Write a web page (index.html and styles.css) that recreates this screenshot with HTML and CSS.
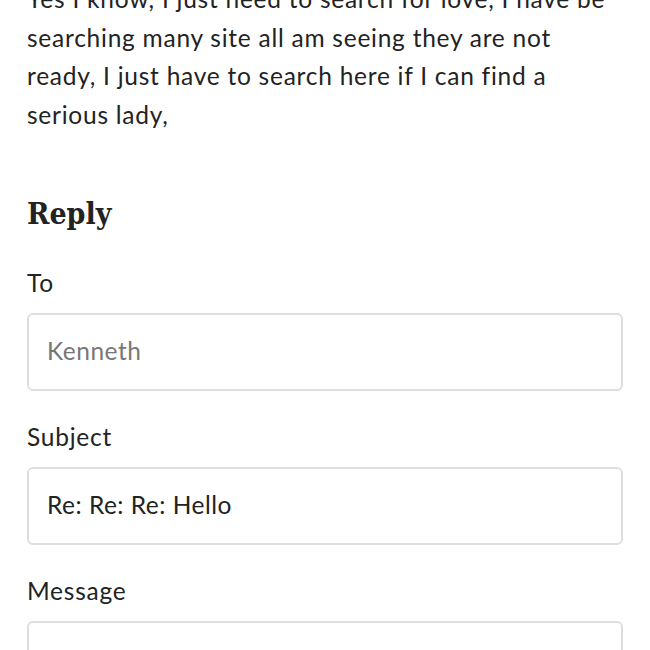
FILE: index.html
```html
<!DOCTYPE html>
<html>
<head>
<meta charset="utf-8">
<link rel="stylesheet" href="styles.css">
</head>
<body>
<div class="page">
  <p class="message-body">Yes I know, I just need to search for love, I have be searching many site all am seeing they are not ready, I just have to search here if I can find a serious lady,</p>
  <h2 class="reply-title">Reply</h2>
  <form class="reply-form">
    <label class="field-label">To</label>
    <div class="field-box muted">Kenneth</div>
    <label class="field-label">Subject</label>
    <div class="field-box">Re: Re: Re: Hello</div>
    <label class="field-label">Message</label>
    <div class="field-box tall"></div>
  </form>
</div>
</body>
</html>
```
FILE: styles.css
```css
html, body {
  margin: 0;
  padding: 0;
  background: #fff;
}
body {
  font-family: Lato, "Open Sans", sans-serif;
  color: #232323;
  overflow: hidden;
  letter-spacing: 0.75px;
}
.page {
  padding: 0 27px;
  width: 596px;
}
.message-body {
  margin: -20px 0 0 0;
  font-size: 24.5px;
  line-height: 38.5px;
  width: 596px;
}
.reply-title {
  margin: 60px 0 0 0;
  font-family: "DejaVu Serif Condensed", "DejaVu Serif", serif;
  font-weight: bold;
  font-size: 30px;
  line-height: 40px;
  height: 40px;
  letter-spacing: 0;
}
.reply-form {
  display: flex;
  flex-direction: column;
  margin-top: 35px;
}
.field-label {
  font-size: 24.5px;
  line-height: 28px;
  height: 28px;
  margin-bottom: 16px;
}
.field-box {
  box-sizing: border-box;
  height: 78px;
  border: 2px solid #dedede;
  border-radius: 6px;
  padding: 0 18px 3px 18px;
  display: flex;
  align-items: center;
  font-size: 24.5px;
  letter-spacing: 0.5px;
  color: #232323;
  margin-bottom: 32px;
}
.field-box.muted {
  color: #777;
}
.field-box.tall {
  height: 160px;
}
```
